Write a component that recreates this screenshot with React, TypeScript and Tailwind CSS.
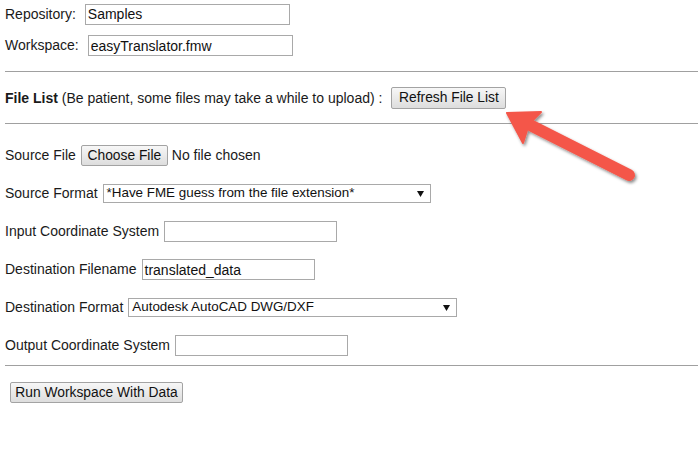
import React from "react";

const btn =
  "whitespace-nowrap rounded-[2px] border border-[#a3a3a3] bg-gradient-to-b from-[#f7f7f7] to-[#dddddd] p-0 text-center text-[13.8px] leading-none text-[#111]";
const field =
  "h-[21px] w-[173px] border border-[#a9a9a9] bg-white px-[2px] text-[14px] leading-none text-[#111]";

function Select({ value, width }: { value: string; width: string }) {
  return (
    <div
      className={`flex h-[19px] items-center justify-between border border-[#a9a9a9] bg-white pl-[3px] pr-[6px] text-[13.4px] text-[#111] ${width}`}
    >
      <span>{value}</span>
      <svg width="7" height="7" viewBox="0 0 7 7">
        <path d="M0 1h7L3.5 7z" fill="#111" />
      </svg>
    </div>
  );
}

function Row({ label, children }: { label: string; children: React.ReactNode }) {
  return (
    <div className="flex h-[21px] items-center gap-[5px]">
      <span>{label}</span>
      {children}
    </div>
  );
}

export default function App() {
  return (
    <div className="relative h-[462px] w-[698px] overflow-hidden bg-white font-['Liberation_Sans',Arial,sans-serif] text-[14px] text-[#1a1a1a]">
      <div className="pl-[5px]">
        <div className="mt-[4px] flex h-[20px] items-center gap-[9px]">
          <span>Repository:</span>
          <div className={`${field} flex h-[20px] w-[205px] items-center`}>Samples</div>
        </div>
        <div className="mt-[11px] flex h-[21px] items-center gap-[9px]">
          <span>Workspace:</span>
          <div className={`${field} flex w-[205px] items-center`}>easyTranslator.fmw</div>
        </div>

        <div className="mt-[15px] border-t border-[#a0a0a0]" />

        <div className="mt-[15px] flex h-[22px] items-center gap-[9px]">
          <span>
            <b>File List</b> (Be patient, some files may take a while to upload) :
          </span>
          <button className={`${btn} h-[22px] w-[115px]`}>Refresh File List</button>
        </div>

        <div className="mt-[14px] border-t border-[#a0a0a0]" />

        <div className="mt-[21px] flex flex-col gap-[17px]">
          <Row label="Source File">
            <button className={`${btn} h-[21px] w-[87px]`}>Choose File</button>
            <span className="-ml-[1px]">No file chosen</span>
          </Row>
          <Row label="Source Format">
            <Select value="*Have FME guess from the file extension*" width="w-[328px]" />
          </Row>
          <Row label="Input Coordinate System">
            <div className={field} />
          </Row>
          <Row label="Destination Filename">
            <div className={`${field} flex items-center`}>translated_data</div>
          </Row>
          <Row label="Destination Format">
            <Select value="Autodesk AutoCAD DWG/DXF" width="w-[329px]" />
          </Row>
          <Row label="Output Coordinate System">
            <div className={field} />
          </Row>
        </div>

        <div className="mt-[9px] border-t border-[#a0a0a0]" />

        <button className={`${btn} ml-[5px] mt-[16px] h-[21px] w-[173px]`}>
          Run Workspace With Data
        </button>
      </div>

      {/* red call-out arrow */}
      <svg className="pointer-events-none absolute inset-0" width="698" height="462">
        <defs>
          <filter id="sh" x="-20%" y="-20%" width="140%" height="140%">
            <feDropShadow dx="1.5" dy="2" stdDeviation="1.6" floodColor="#000" floodOpacity="0.45" />
          </filter>
        </defs>
        <g filter="url(#sh)" fill="#f4574a" stroke="#f4574a">
          <line x1="528" y1="124" x2="629" y2="175" strokeWidth="12" strokeLinecap="round" />
          <path d="M507 113 L541 112 L529 124 L523 143 Z" strokeWidth="2" strokeLinejoin="round" />
        </g>
      </svg>
    </div>
  );
}
